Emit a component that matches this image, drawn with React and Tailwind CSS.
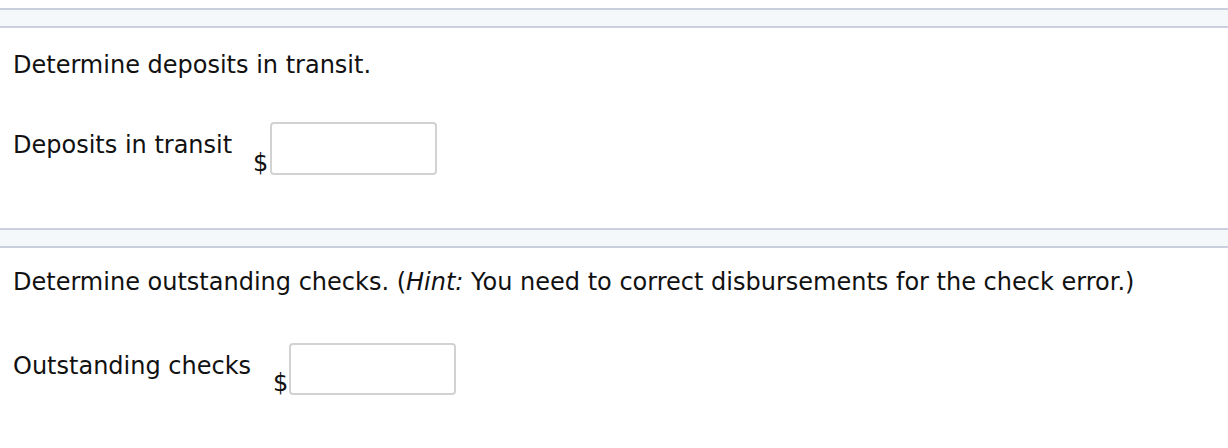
export default function App() {
  return (
    <div className="w-[1228px] h-[448px] bg-white pt-2 text-[24px] leading-[28px] text-[#111]" style={{ fontFamily: '"DejaVu Sans", Verdana, sans-serif' }}>
      <div className="h-5 border-y-2 border-[#c9cfdd] bg-[#f4f8fb]" />
      <p className="pl-[13px] mt-[23px]">Determine deposits in transit.</p>
      <div className="flex items-start pl-[13px] mt-[43px]">
        <span className="w-[240px] mt-[9px]">Deposits in transit</span>
        <div className="flex items-end">
          <span className="mr-[2px] mb-[-2px]">$</span>
          <div className="w-[167px] h-[53px] rounded-[4px] border-2 border-[#d2d2d2] bg-white" />
        </div>
      </div>
      <div className="h-5 mt-[53px] border-y-2 border-[#c9cfdd] bg-[#f4f8fb]" />
      <p className="pl-[13px] mt-[20px]">
        Determine outstanding checks. (<i>Hint:</i> You need to correct disbursements for the check error.)
      </p>
      <div className="flex items-start pl-[13px] mt-[47px]">
        <span className="w-[260px] mt-[9px]">Outstanding checks</span>
        <div className="flex items-end">
          <span className="mr-[1px] mb-[-2px]">$</span>
          <div className="w-[167px] h-[52px] rounded-[4px] border-2 border-[#d2d2d2] bg-white" />
        </div>
      </div>
    </div>
  );
}
